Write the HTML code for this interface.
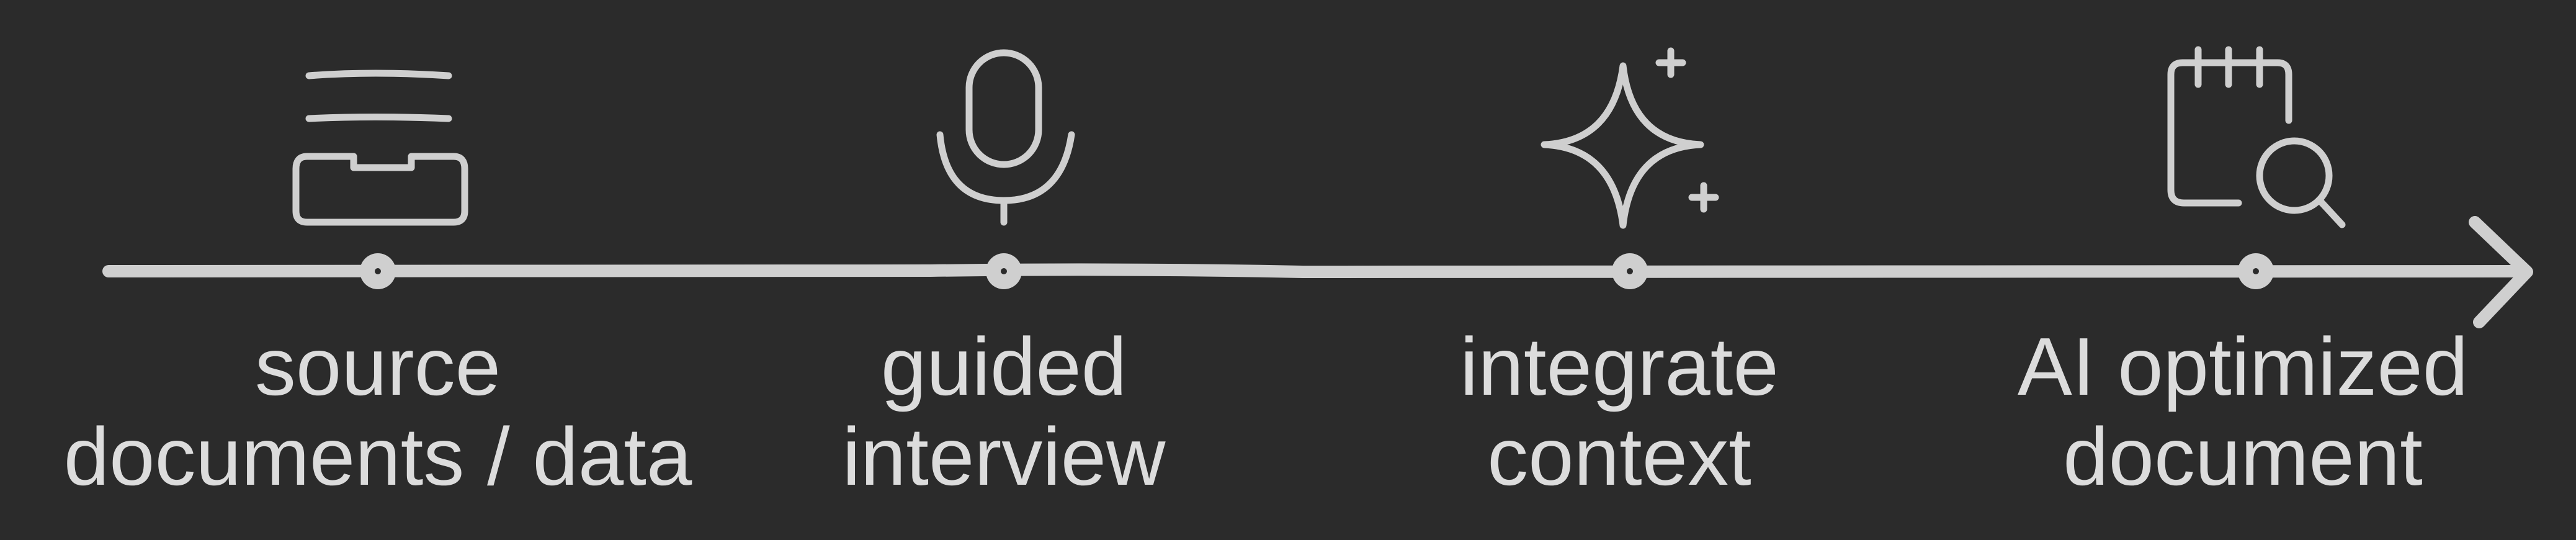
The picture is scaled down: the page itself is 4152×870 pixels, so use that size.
<!DOCTYPE html>
<html><head><meta charset="utf-8"><style>
html,body{margin:0;padding:0;background:#2b2b2b;}
svg{display:block}
text{font-family:"Liberation Sans",sans-serif;font-size:132px;fill:#dcdcdc;text-anchor:middle}
</style></head><body>
<svg width="4152" height="870" viewBox="0 0 4152 870" xmlns="http://www.w3.org/2000/svg">
<rect width="4152" height="870" fill="#2b2b2b"/>
<g fill="none" stroke="#cfcfcf" stroke-linecap="round" stroke-linejoin="round">
<!-- timeline -->
<path d="M175 437 L1500 436 Q1800 432 2100 438 L4070 437" stroke-width="20"/>
<path d="M3989 358 L4073 438 L3996 519" stroke-width="20"/>
<!-- icon1 inbox -->
<g stroke-width="11">
<path d="M498 122 Q600 114 723 122"/>
<path d="M498 191 Q600 186 723 191"/>
<path d="M570 252 L495 252 Q477 252 477 272 L477 340 Q477 358 495 358 L731 358 Q749 358 749 340 L749 272 Q749 252 731 252 L663 252 L663 270 L570 270 Z"/>
<!-- mic -->
<rect x="1562" y="85" width="112" height="180" rx="56"/>
<path d="M1515 217 Q1525 323 1618 323 Q1711 323 1727 217"/>
<path d="M1618 323 L1618 358"/>
<!-- sparkle -->
<path d="M2616 106 Q2600 228 2489 233 Q2600 238 2616 363 Q2630 238 2741 233 Q2630 228 2616 106 Z"/>
<path d="M2693 82 V120 M2674 101 H2712"/>
<path d="M2746 299 V337 M2727 318 H2765"/>
<!-- doc search -->
<path d="M3608 327 L3520 327 Q3499 327 3499 306 L3499 120 Q3499 101 3518 101 L3671 101 Q3689 101 3689 120 L3689 194"/>
<path d="M3543 80 V136 M3592 80 V136 M3642 80 V136"/>
<circle cx="3698" cy="283" r="56"/>
<path d="M3738 322 L3775 362"/>
</g>
</g>
<!-- dots -->
<g fill="#cfcfcf" stroke="#2b2b2b" stroke-width="0">
<circle cx="609" cy="437" r="29"/><circle cx="1618" cy="437" r="29"/>
<circle cx="2627" cy="437" r="29"/><circle cx="3636" cy="437" r="29"/>
</g>
<g fill="#2b2b2b">
<circle cx="609" cy="437" r="5"/><circle cx="1618" cy="437" r="5"/>
<circle cx="2627" cy="437" r="5"/><circle cx="3636" cy="437" r="5"/>
</g>
<text x="609" y="636">source</text>
<text x="609" y="781">documents / data</text>
<text x="1618" y="636">guided</text>
<text x="1618" y="781">interview</text>
<text x="2610" y="636">integrate</text>
<text x="2610" y="781">context</text>
<text x="3615" y="636">AI optimized</text>
<text x="3615" y="781">document</text>
</svg>
</body></html>
